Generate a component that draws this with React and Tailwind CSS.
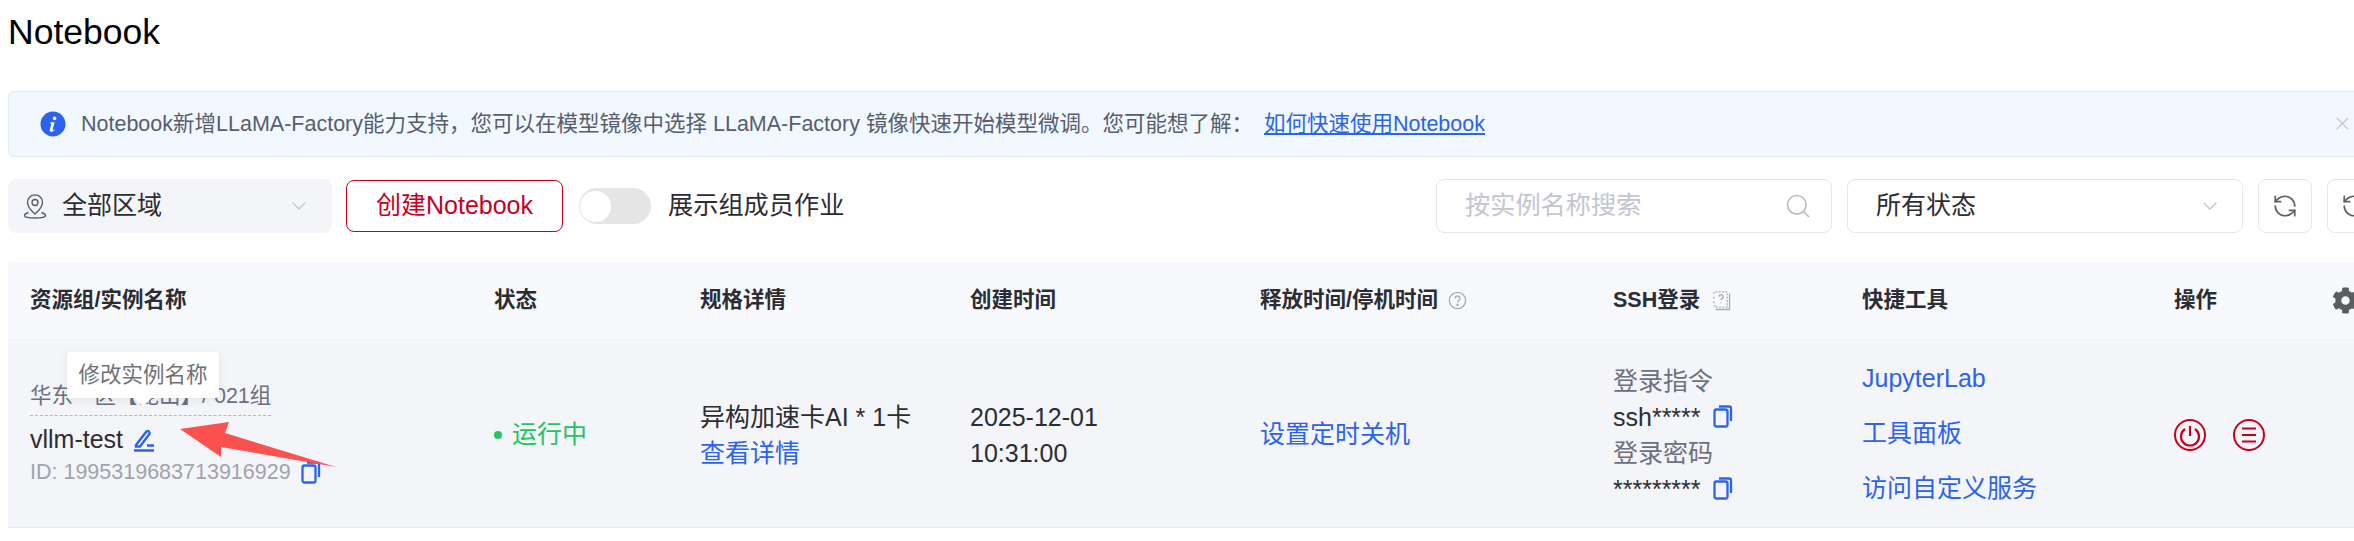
import React from 'react';
import { ChevronDown, Search, X, RefreshCw, RotateCcw } from 'lucide-react';
import { FaCog } from 'react-icons/fa';

const CopyIcon = ({ className }) => (
  <svg viewBox="0 0 20 23" className={className} fill="none" stroke="#2b62ee" strokeWidth="2.3">
    <rect x="1.5" y="4.5" width="13" height="17" rx="2" />
    <path d="M6 1.5h10a2 2 0 0 1 2 2V16" />
  </svg>
);

const HeadCell = ({ children, className = '' }) => (
  <div className={`flex items-center pl-[22px] whitespace-nowrap text-[21.5px] font-bold text-[#2b2d33] ${className}`}>{children}</div>
);

const App = () => {
  return (
    <div className="relative w-[2354px] h-[541px] overflow-hidden bg-white pl-2 font-['Liberation_Sans','Noto_Sans_CJK_SC',sans-serif]">
      {/* Title */}
      <div className="h-[91px] pt-[9px] text-[35.5px] leading-[46px] text-black">Notebook</div>

      {/* Notice */}
      <div className="flex items-center h-[66px] w-[2360px] rounded-md border border-[#dcecfd] bg-[#f1f8ff] pl-[31px]">
        <svg viewBox="0 0 26 26" className="w-[26px] h-[26px] shrink-0">
          <circle cx="13" cy="13" r="12.5" fill="#2b62ee" />
          <circle cx="14.6" cy="7.4" r="1.8" fill="#fff" />
          <path d="M10.4 11.2h4.2l-2 7.4c-.2.7.5.8 1.9-.3l.3.5c-1.4 1.5-2.6 2.1-3.8 2-1.2-.1-1.5-.9-1.2-2l1.4-5.4c.2-.8-.2-1-1-1z" fill="#fff" />
        </svg>
        <div className="ml-[15px] whitespace-nowrap text-[21.5px] text-[#585d6e]">
          Notebook新增LLaMA-Factory能力支持，您可以在模型镜像中选择 LLaMA-Factory 镜像快速开始模型微调。您可能想了解：
          <span className="ml-[11px] text-[#2b62ee] underline underline-offset-2">如何快速使用Notebook</span>
        </div>
        <X className="absolute left-[2332px] top-[113px] w-[21px] h-[21px] text-[#c6c9d3]" strokeWidth={1.5} />
      </div>

      {/* Toolbar */}
      <div className="flex mt-[22px] h-[54px] items-center">
        <div className="flex items-center w-[1428px] shrink-0">
          <div className="flex items-center w-[324px] h-[54px] rounded-lg bg-[#f4f5f9] pl-[15px] pr-[21px]">
            <svg viewBox="0 0 24 26" className="w-[24px] h-[26px] shrink-0" fill="none" stroke="#585d6e" strokeWidth="1.4">
              <path d="M12 21c-4-3.6-7.5-7.4-7.5-11.6a7.5 7.5 0 0 1 15 0C19.500 13.600 16 17.400 12 21z" />
              <circle cx="12" cy="9.500" r="3" />
              <path d="M5.500 19.500C3 20.300 1.500 21.300 1.500 22.500c0 1.500 4.700 2.500 10.500 2.500s10.500-1 10.500-2.500c0-1.200-1.500-2.200-4-3" />
            </svg>
            <span className="ml-[15px] text-[25px] text-[#2b2d33]">全部区域</span>
            <ChevronDown className="ml-auto w-[24px] h-[24px] text-[#c3c6d0]" strokeWidth={1.4} />
          </div>
          <button className="ml-[14px] w-[217px] h-[52px] rounded-lg border border-[#c7001f] bg-white text-[25px] text-[#c7001f]">
            创建Notebook
          </button>
          <div className="ml-4 flex items-center w-[72px] h-[36px] rounded-full bg-[#e5e5e5] pl-px">
            <div className="w-[31px] h-[31px] rounded-full bg-white" />
          </div>
          <span className="ml-[17px] text-[25.2px] text-[#2b2d33]">展示组成员作业</span>
        </div>
        <div className="flex items-center gap-[15px] shrink-0">
          <div className="flex items-center w-[396px] h-[54px] rounded-lg border border-[#e5e6eb] pl-7 pr-[19px]">
            <span className="text-[25.2px] text-[#c3c6d0]">按实例名称搜索</span>
            <Search className="ml-auto w-[28px] h-[28px] text-[#b9bcc4]" strokeWidth={1.4} />
          </div>
          <div className="flex items-center w-[396px] h-[54px] rounded-lg border border-[#e5e6eb] pl-7 pr-[20px]">
            <span className="text-[25px] text-[#2b2d33]">所有状态</span>
            <ChevronDown className="ml-auto w-[24px] h-[24px] text-[#c3c6d0]" strokeWidth={1.4} />
          </div>
          <div className="flex items-center justify-center w-[54px] h-[54px] rounded-lg border border-[#e5e6eb]">
            <RefreshCw className="w-[26px] h-[26px] text-[#5f6168] -scale-x-100" strokeWidth={1.6} />
          </div>
          <div className="flex items-center justify-center w-[54px] h-[54px] rounded-lg border border-[#e5e6eb]">
            <RotateCcw className="w-[26px] h-[26px] text-[#5f6168]" strokeWidth={1.6} />
          </div>
        </div>
      </div>

      {/* Table */}
      <div className="mt-[29px]">
        <div className="grid grid-cols-[464px_206px_270px_290px_353px_249px_310px_204px] h-[78px] bg-[#f8f9fd] border-b border-[#eff0f3]">
          <HeadCell>资源组/实例名称</HeadCell>
          <HeadCell>状态</HeadCell>
          <HeadCell>规格详情</HeadCell>
          <HeadCell>创建时间</HeadCell>
          <HeadCell>
            释放时间/停机时间
            <svg viewBox="0 0 20 20" className="ml-2.5 w-[19px] h-[19px]" fill="none" stroke="#a9abb2" strokeWidth="1.4">
              <circle cx="10" cy="10" r="8.6" />
              <path d="M7.4 7.8a2.6 2.6 0 1 1 3.9 2.3c-.9.5-1.3 1-1.3 2" />
              <circle cx="10" cy="14.6" r=".6" fill="#a9abb2" />
            </svg>
          </HeadCell>
          <HeadCell>
            SSH登录
            <svg viewBox="0 0 20 22" className="ml-3 w-[19px] h-[21px]" fill="none" stroke="#a9abb2" strokeWidth="1.4">
              <path d="M2 4V2h14v16H3v-2M2 7v2M2 12v2" strokeDasharray="2 1.5" />
              <path d="M18.5 3.5V20.5H4" />
              <path d="M7.4 7a2.2 2.2 0 1 1 3.2 2c-.8.4-1.1.9-1.1 1.8M9.5 13v1" />
            </svg>
          </HeadCell>
          <HeadCell>快捷工具</HeadCell>
          <HeadCell className="pl-[24px]">
            操作
            <FaCog className="ml-[115px] w-[27px] h-[27px] shrink-0 text-[#5b5c60]" />
          </HeadCell>
        </div>

        <div className="relative grid grid-cols-[464px_206px_270px_290px_353px_249px_310px_204px] h-[188px] bg-[#f4f5f9] border-b border-[#e8e9ec]">
          {/* Name */}
          <div className="pl-[22px] pt-[41px]">
            <div className="inline-block border-b border-dashed border-[#b4b6bc] pb-[3px] text-[21.5px] leading-[31px] text-[#6b7080]">
              华东一区【昆山】/ 021组
            </div>
            <div className="mt-[6px] flex items-center h-[36px] text-[25px] text-[#2b2d33]">
              vllm-test
              <svg viewBox="0 0 22 24" className="ml-2.5 w-[22px] h-[24px]" fill="none" stroke="#2b62ee" strokeWidth="2.4">
                <path d="M3 17 13.500 3.500a2 2 0 0 1 3 2.400L7 18.500H3z" />
                <path d="M14 17.500h7M1 22.500h20" />
              </svg>
            </div>
            <div className="flex items-center h-[28px] text-[21.5px] text-[#a1a3aa]">
              ID: 1995319683713916929
              <CopyIcon className="ml-2.5 w-[20px] h-[23px]" />
            </div>
          </div>

          {/* Status */}
          <div className="flex items-center pl-[22px] pt-[2px] text-[25px] text-[#22c55e]">
            <div className="w-2 h-2 rounded-full bg-[#22c55e]" />
            <span className="ml-2.5">运行中</span>
          </div>

          {/* Spec */}
          <div className="flex flex-col justify-center pl-[22px] pt-[2px] text-[25px] leading-[36px] text-[#2b2d33]">
            <div>异构加速卡AI * 1卡</div>
            <div className="text-[#2b62ee]">查看详情</div>
          </div>

          {/* Created */}
          <div className="flex flex-col justify-center pl-[22px] pt-[2px] text-[25px] leading-[36px] text-[#2b2d33]">
            <div>2025-12-01</div>
            <div>10:31:00</div>
          </div>

          {/* Shutdown */}
          <div className="flex items-center pl-[22px] pt-[2px] text-[25px] text-[#2b62ee]">设置定时关机</div>

          {/* SSH */}
          <div className="flex flex-col justify-center pl-[22px] pt-[2px] text-[25px] leading-[36px] text-[#2b2d33]">
            <div className="text-[#6b7080]">登录指令</div>
            <div className="flex items-center">
              ssh*****
              <CopyIcon className="ml-3 w-[20px] h-[23px]" />
            </div>
            <div className="text-[#6b7080]">登录密码</div>
            <div className="flex items-center">
              *********
              <CopyIcon className="ml-3 w-[20px] h-[23px]" />
            </div>
          </div>

          {/* Tools */}
          <div className="flex flex-col justify-center gap-[19px] pl-[22px] pb-[1px] text-[25px] leading-[36px] text-[#2b62ee]">
            <div>JupyterLab</div>
            <div>工具面板</div>
            <div>访问自定义服务</div>
          </div>

          {/* Actions */}
          <div className="flex items-center gap-[27px] pl-[24px] pt-[2px]">
            <svg viewBox="0 0 32 32" className="w-8 h-8" fill="none" stroke="#c7001f" strokeWidth="2">
              <circle cx="16" cy="16" r="15" />
              <path d="M11 10a9 9 0 1 0 10 0" strokeWidth="2.200" />
              <path d="M16 7v10" strokeWidth="2.200" />
            </svg>
            <svg viewBox="0 0 32 32" className="w-8 h-8" fill="none" stroke="#c7001f" strokeWidth="2">
              <circle cx="16" cy="16" r="15" />
              <path d="M9 9.500h14M9 16h14M9 22.500h14" strokeWidth="2.200" />
            </svg>
          </div>

          {/* Tooltip */}
          <div className="absolute left-[59px] top-[12px] flex items-center justify-center w-[152px] h-[46px] rounded bg-white text-[21.5px] text-[#6f7178] shadow-[0_2px_10px_rgba(0,0,0,0.08)]">
            修改实例名称
            <div className="absolute left-[70px] top-[40px] w-3 h-3 rotate-45 bg-white" />
          </div>

          {/* Annotation arrow */}
          <svg viewBox="0 0 170 50" className="absolute left-[164px] top-[81px] w-[170px] h-[50px]">
            <polygon points="8,8 57,1 53,12 164,46 49,26 49,36" fill="#fb5151" />
          </svg>
        </div>
      </div>
    </div>
  );
};

export default App;
